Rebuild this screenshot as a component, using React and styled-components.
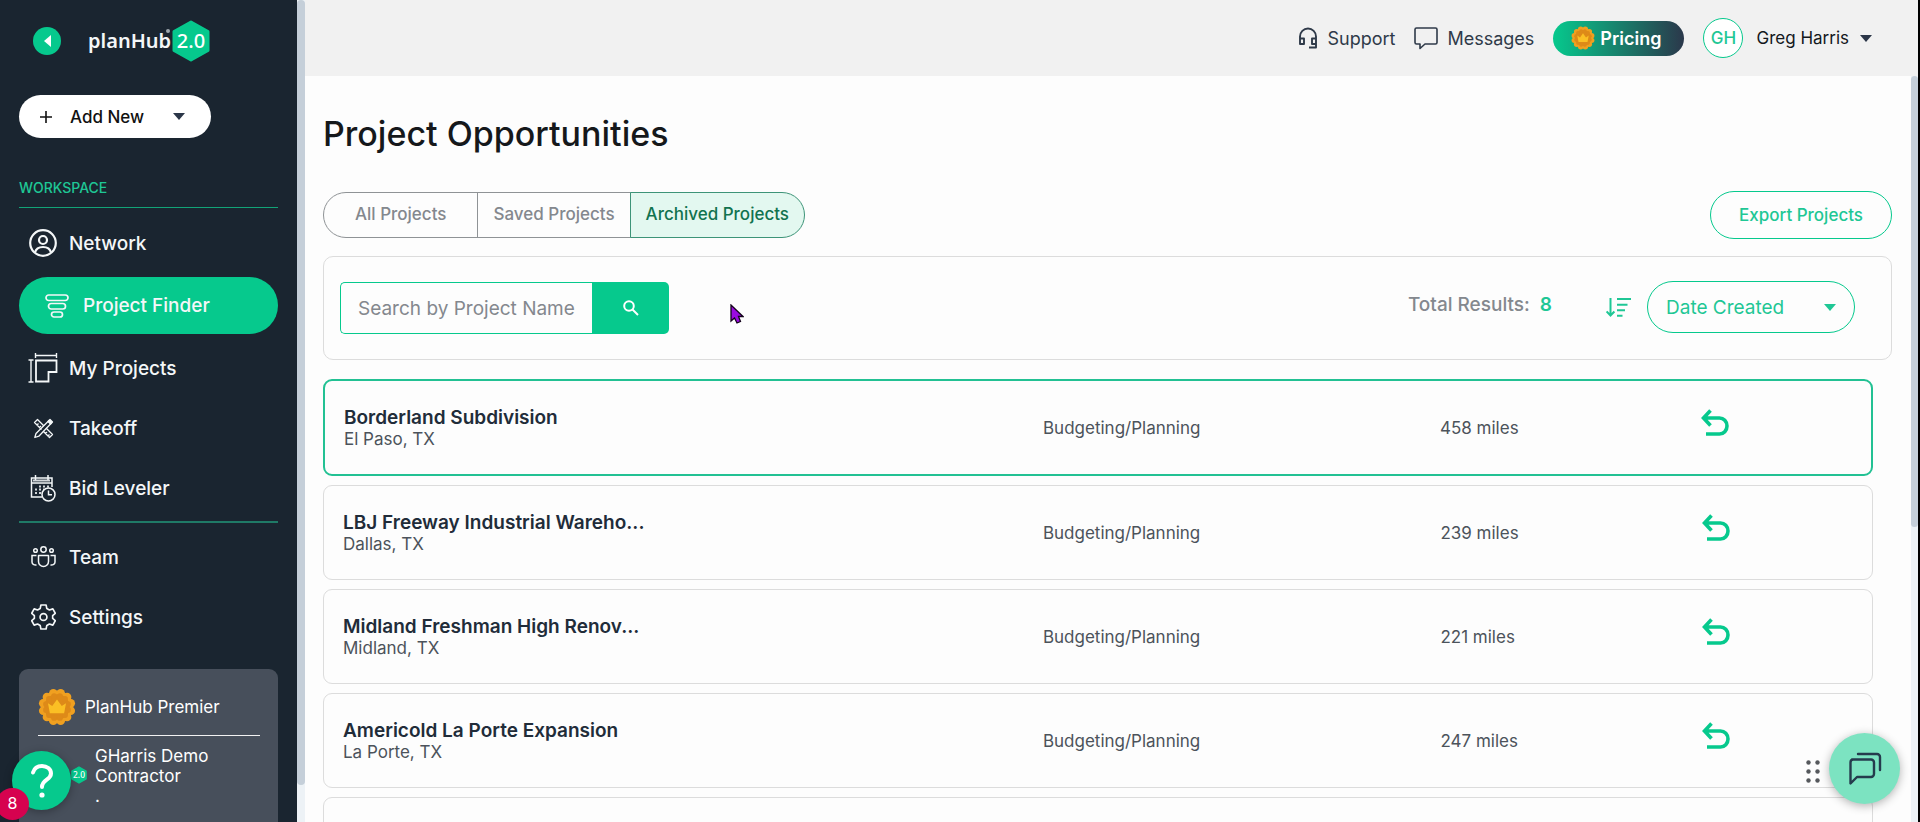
import React from 'react';
import styled, { createGlobalStyle, css } from 'styled-components';

const colors = {
    green: '#06c98d',
    greenText: '#1fc795',
    darkGreen: '#11734f',
    navy: '#1a2530',
    panel: '#474f5b',
    header: '#f1f1f1',
    page: '#fdfdfd',
    border: '#dcdcdc',
    text: '#25303c',
    muted: '#84888e',
    caret: '#2b3648',
    thumb: '#c5cfd9',
    track: '#edf2f6'
};

const GlobalStyle = createGlobalStyle`
    * {
        box-sizing:border-box;
    }
    body {
        margin:0;
        background:${ colors.page };
        color:${ colors.text };
        font-family:Inter, "Liberation Sans", sans-serif;
        font-size:17px;
    }
    button, input, select {
        font:inherit;
        color:inherit;
        margin:0;
    }
    button, select {
        cursor:pointer;
    }
    a {
        color:inherit;
        text-decoration:none;
    }
    svg {
        display:block;
        flex:none;
    }
`;

const Shell = styled.div`
    display:flex;
    height:100vh;
    overflow:hidden;
    border-right:2px solid #000;
`;

/* sidebar */

const Sidebar = styled.aside`
    display:flex;
    flex:none;
    width:305px;
    background:${ colors.navy };
    color:#f4f7f8;
`;

const SidebarBody = styled.div`
    flex:1;
    padding:20px 19px 0;
    overflow:hidden;
`;

const ScrollTrack = styled.div`
    flex:none;
    width:${ props => props.$width }px;
    background:${ colors.track };
`;

const ScrollThumb = styled.div`
    height:${ props => props.$size };
    border-radius:4px;
    background:${ colors.thumb };
`;

const Brand = styled.div`
    display:flex;
    align-items:center;
    height:42px;
    padding-left:14px;
`;

const CollapseButton = styled.button`
    display:flex;
    align-items:center;
    justify-content:center;
    width:28px;
    height:28px;
    margin-right:27px;
    padding:0;
    border:0;
    border-radius:50%;
    background:${ colors.green };
    color:#fff;
`;

const LogoLink = styled.a`
    display:flex;
    align-items:center;
    gap:1px;
`;

const Wordmark = styled.span`
    position:relative;
    font-family:"Noto Sans", sans-serif;
    font-size:20px;
    font-weight:600;
    line-height:42px;
`;

const TrademarkDot = styled.span`
    position:absolute;
    top:9px;
    right:1px;
    width:4px;
    height:4px;
    border-radius:50%;
    background:#9fa8ae;
`;

const AddNew = styled.button`
    display:flex;
    align-items:center;
    width:192px;
    height:43px;
    margin-top:33px;
    padding:0 26px 0 21px;
    border:0;
    border-radius:22px;
    background:#fff;
    color:${ colors.caret };

    span {
        flex:1;
        padding-left:18px;
        color:#111;
        font-weight:500;
        text-align:left;
    }
`;

const SectionTitle = styled.h2`
    margin:40px 0 0;
    padding-bottom:9px;
    border-bottom:1px solid #12a377;
    color:${ colors.greenText };
    font-size:14px;
    font-weight:500;
    line-height:20px;
`;

const NavList = styled.ul`
    margin:0;
    padding:5px 0 3px;
    list-style:none;

    & + & {
        padding-top:4px;
        border-top:2px solid #1f7a66;
    }
`;

const NavLink = styled.a`
    display:flex;
    align-items:center;
    gap:10px;
    height:60px;
    padding-left:8px;
    font-size:19px;
    font-weight:500;

    ${ props => props.$active && css`
        height:57px;
        margin:4px 0;
        padding-left:22px;
        border-radius:29px;
        background:${ colors.green };
    ` }
`;

const NavIcon = styled.span`
    display:flex;
    justify-content:center;
    width:32px;
`;

const PlanCard = styled.section`
    height:200px;
    margin-top:19px;
    padding:19px 18px 0 19px;
    border-radius:9px;
    background:${ colors.panel };
    color:#fff;
    line-height:20px;
`;

const PlanName = styled.div`
    display:flex;
    align-items:center;
    gap:9px;
    padding-bottom:9px;
    border-bottom:1px solid #f2f2f2;
`;

const Company = styled.div`
    display:flex;
    align-items:flex-start;
    gap:8px;
    padding:10px 0 0 33px;

    svg {
        margin-top:20px;
    }
    p {
        margin:0;
    }
`;

/* header */

const Main = styled.div`
    display:flex;
    flex:1;
    flex-direction:column;
    min-width:0;
`;

const Header = styled.header`
    display:flex;
    flex:none;
    align-items:center;
    justify-content:flex-end;
    height:76px;
    padding-right:46px;
    background:${ colors.header };
    color:#2f3a49;
    font-size:18px;
`;

const HeaderLink = styled.a`
    display:flex;
    align-items:center;
    gap:9px;
    margin-right:19px;
`;

const Pricing = styled.a`
    display:flex;
    align-items:center;
    gap:5px;
    height:35px;
    margin-right:19px;
    padding:0 23px 0 18px;
    border-radius:18px;
    background:linear-gradient(90deg, ${ colors.green }, #2b384b);
    color:#fff;
    font-weight:600;
`;

const UserMenu = styled.button`
    display:flex;
    align-items:center;
    padding:0;
    border:0;
    background:none;
    color:#14181d;

    svg {
        margin-left:11px;
        color:${ colors.caret };
    }
`;

const UserName = styled.span`
    font-size:17px;
`;

const Avatar = styled.span`
    width:40px;
    height:40px;
    margin-right:13px;
    border:1px solid ${ colors.green };
    border-radius:50%;
    background:#fff;
    color:${ colors.greenText };
    font-size:17px;
    font-weight:500;
    line-height:38px;
    text-align:center;
`;

/* content */

const Viewport = styled.div`
    display:flex;
    flex:1;
    min-height:0;
`;

const Content = styled.main`
    flex:1;
    min-width:0;
    padding:38px 19px 0 18px;
    overflow:hidden;
`;

const PageTitle = styled.h1`
    margin:0;
    color:#15181b;
    font-size:34px;
    font-weight:500;
    line-height:40px;
`;

const TabsRow = styled.div`
    display:flex;
    align-items:center;
    justify-content:space-between;
    margin-top:37px;
`;

const Tabs = styled.div`
    display:flex;
    height:46px;
`;

const Tab = styled.button`
    margin-right:-1px;
    padding:0 15px 2px;
    border:1px solid #8f9396;
    background:${ colors.page };
    color:${ colors.muted };
    font-weight:500;

    &:first-child {
        padding:0 31px 2px;
        border-radius:23px 0 0 23px;
    }
    &:last-child {
        margin-right:0;
        border-radius:0 23px 23px 0;
    }
    ${ props => props.$active && css`
        border-color:#3d9478;
        background:#e3f8f0;
        color:${ colors.darkGreen };
    ` }
`;

const ExportButton = styled.button`
    height:48px;
    padding:0 28px;
    border:1px solid ${ colors.green };
    border-radius:24px;
    background:${ colors.page };
    color:${ colors.greenText };
    font-weight:500;
`;

const FilterBar = styled.div`
    display:flex;
    align-items:center;
    justify-content:space-between;
    height:104px;
    margin-top:17px;
    padding:0 36px 0 16px;
    border:1px solid ${ colors.border };
    border-radius:10px;
`;

const SearchForm = styled.form`
    display:flex;
    width:329px;
    height:52px;
`;

const SearchInput = styled.input`
    flex:1;
    min-width:0;
    padding:0 0 0 17px;
    border:1px solid ${ colors.green };
    border-right:0;
    border-radius:5px 0 0 5px;
    background:${ colors.page };
    font-size:19px;
    outline:none;

    &::placeholder {
        color:${ colors.muted };
        opacity:1;
    }
`;

const SearchButton = styled.button`
    display:flex;
    align-items:center;
    justify-content:center;
    width:77px;
    padding:0;
    border:0;
    border-radius:0 5px 5px 0;
    background:${ colors.green };
    color:#fff;
`;

const SortGroup = styled.div`
    display:flex;
    align-items:center;
    padding-bottom:2px;
`;

const Total = styled.p`
    margin:0 54px 5px 0;
    color:${ colors.muted };
    font-size:19px;
    font-weight:500;

    strong {
        padding-left:5px;
        color:${ colors.greenText };
        font-weight:600;
    }
`;

const SortSelect = styled.label`
    display:grid;
    align-items:center;
    margin-left:16px;
    color:${ colors.greenText };

    select, svg {
        grid-area:1 / 1;
    }
    select {
        width:208px;
        height:52px;
        padding:0 40px 0 18px;
        border:1px solid ${ colors.green };
        border-radius:26px;
        background:transparent;
        font-size:19px;
        appearance:none;
        outline:none;
    }
    svg {
        justify-self:end;
        margin-right:19px;
        pointer-events:none;
    }
`;

const ProjectTable = styled.table`
    display:block;
    margin:19px 19px 0 0;

    tbody {
        display:grid;
        gap:9px;
    }
`;

const ProjectRow = styled.tr`
    display:grid;
    grid-template-columns:699fr 397fr 261fr 170fr;
    align-items:center;
    height:95px;
    padding-left:19px;
    border:1px solid ${ colors.border };
    border-radius:9px;

    ${ props => props.$selected && css`
        height:97px;
        border:2px solid #22c193;
    ` }
`;

const Cell = styled.td`
    padding:0;
    color:#4c535b;
`;

const ProjectName = styled.a`
    display:block;
    padding-top:2px;
    color:#212c39;
    font-size:19px;
    font-weight:600;
    line-height:22px;
`;

const Location = styled.span`
    display:block;
    line-height:21px;
`;

const RestoreButton = styled.button`
    display:block;
    margin-bottom:11px;
    padding:0;
    border:0;
    background:none;
    color:${ colors.green };
`;

/* floating widgets */

const HelpButton = styled.button`
    position:fixed;
    left:12px;
    bottom:12px;
    display:flex;
    align-items:center;
    justify-content:center;
    width:59px;
    height:59px;
    padding:0;
    border:0;
    border-radius:50%;
    background:${ colors.green };
    color:#fff;
    box-shadow:0 2px 8px rgba(0, 0, 0, .3);
`;

const HelpCount = styled.span`
    position:fixed;
    left:-4px;
    bottom:2px;
    width:33px;
    height:32px;
    border-radius:50%;
    background:#d6024f;
    color:#fff;
    font-size:16px;
    line-height:30px;
    text-align:center;
`;

const ChatWidget = styled.div`
    position:fixed;
    right:20px;
    bottom:18px;
    display:flex;
    align-items:center;
    gap:9px;
`;

const DragHandle = styled.span`
    padding-top:7px;
`;

const ChatButton = styled.button`
    display:flex;
    align-items:center;
    justify-content:center;
    width:71px;
    height:71px;
    padding:0;
    border:0;
    border-radius:50%;
    background:#7ce3c1;
    color:#253b4d;
    box-shadow:0 2px 10px rgba(0, 0, 0, .3);
`;

const Pointer = styled.svg`
    position:fixed;
    left:730px;
    top:304px;
`;

/* icons */

const Caret = ({ width = 12, height = 7 }) => (
    <svg width={width} height={height} viewBox="0 0 12 7" fill="currentColor" aria-hidden="true">
        <path d="M0 0h12L6 7z" />
    </svg>
);

const Hexagon = ({ width, height }) => (
    <svg width={width} height={height} viewBox="0 0 38 42" aria-hidden="true">
        <path d="M19 2l17 9.500v19L19 40 2 30.500v-19z" fill={colors.green} stroke={colors.green} strokeWidth="3" strokeLinejoin="round" />
        <text x="19" y="28" fill="#fff" fontFamily="Noto Sans, sans-serif" fontSize="20" fontWeight="500" textAnchor="middle">2.0</text>
    </svg>
);

const lobes = Array.from({ length: 12 }, (_, i) => (i * Math.PI) / 6 + Math.PI / 12);

const PremierBadge = ({ size }) => (
    <svg width={size} height={size} viewBox="-20 -20 40 40" aria-hidden="true">
        <g fill="#f0a020">
            <circle r="17" />
            {lobes.map(a => <circle key={a} cx={15 * Math.cos(a)} cy={15 * Math.sin(a)} r="4.500" />)}
        </g>
        <g fill="#de8a18">
            <circle r="13.500" />
            {lobes.map(a => <circle key={a} cx={12 * Math.cos(a)} cy={12 * Math.sin(a)} r="3" />)}
        </g>
        <path d="M-9.500-4l4.500 3 5-7 5 7 4.500-3-2 10.500h-15z" fill="#fbbf24" />
    </svg>
);

const NetworkIcon = () => (
    <svg width="28" height="28" viewBox="0 0 28 28" fill="none" stroke="currentColor" strokeWidth="2.200" aria-hidden="true">
        <circle cx="14" cy="14" r="12.800" />
        <circle cx="14" cy="11" r="4" />
        <path d="M6 23.500c1-4 4-5.500 8-5.500s7 1.500 8 5.500" />
    </svg>
);

const FinderIcon = () => (
    <svg width="24" height="24" viewBox="0 0 24 24" fill="none" stroke="currentColor" strokeWidth="1.700" aria-hidden="true">
        <rect x="1" y="1" width="22" height="5.500" rx="2.700" />
        <rect x="3.500" y="9.500" width="17" height="5.500" rx="2.700" />
        <rect x="6.500" y="18" width="11" height="5" rx="2.500" />
    </svg>
);

const BlueprintIcon = () => (
    <svg width="30" height="30" viewBox="0 0 30 30" fill="none" stroke="currentColor" aria-hidden="true">
        <path d="M8 7.500h20.500V19h-8v9.500H8z" strokeWidth="1.800" />
        <path d="M7 2.500h22M7.500 0v5M28.500 0v5M3 7v22M.5 7h5M.5 29h5" strokeWidth="1.400" />
    </svg>
);

const TakeoffIcon = () => (
    <svg width="21" height="21" viewBox="0 0 21 21" fill="none" stroke="currentColor" strokeWidth="1.300" strokeLinejoin="round" aria-hidden="true">
        <path d="M8.500 11.500L5 8 1.500 4.500l3-3L11 8M13 10l6.500 6.500-3 3L10 13M4 7l1.500-1.500M6.500 9.500L8 8M12.500 15.500L14 14M15 18l1.500-1.500" />
        <path d="M16 2.500L3 15.500 1.800 19.500l4-1.300L18.500 5z" />
        <path d="M15 3.500l2-2 2.500 2.500-2 2z" fill="currentColor" />
    </svg>
);

const BidIcon = () => (
    <svg width="26" height="27" viewBox="0 0 26 27" fill="none" stroke="currentColor" strokeWidth="1.500" aria-hidden="true">
        <path d="M12 22H1.500V3H22v9M1.500 8H22M5.500 0v5M18 0v5" />
        <path d="M9 11.500h2M13 11.500h2M17 11.500h2M5 14.500h2M9 14.500h2M13 14.500h1M5 18h2M9 18h2M3 5.500h17" strokeWidth="2" strokeOpacity=".85" />
        <circle cx="18.500" cy="19.500" r="6.500" fill={colors.navy} />
        <path d="M18.500 15.500v4.300H22" />
    </svg>
);

const TeamIcon = () => (
    <svg width="25" height="22" viewBox="0 0 25 22" fill="none" stroke="currentColor" strokeWidth="1.500" aria-hidden="true">
        <circle cx="12.500" cy="3.500" r="2.700" />
        <circle cx="4.500" cy="4.500" r="1.800" />
        <circle cx="20.500" cy="4.500" r="1.800" />
        <path d="M7.500 9.500h10v6a5 5 0 0 1-10 0z" strokeLinejoin="round" />
        <path d="M5.500 9.500H1v6.500c0 2 2 3.300 4.500 3M19.500 9.500H24v6.500c0 2-2 3.300-4.500 3" />
    </svg>
);

const GearIcon = () => (
    <svg width="25" height="26" viewBox="0 0 24 25" fill="none" stroke="currentColor" strokeWidth="1.600" strokeLinejoin="round" aria-hidden="true">
        <path d="M9.500 1h5l.7 3.400 2.500 1.400L21 4.700l2.300 4.200-2.500 2.200v2.800l2.500 2.200L21 20.300l-3.300-1.100-2.500 1.400-.7 3.400h-5l-.7-3.400-2.500-1.400L3 20.300.7 16.100l2.500-2.200v-2.800L.7 8.900 3 4.700l3.300 1.100 2.500-1.400z" />
        <circle cx="12" cy="12.500" r="3.300" />
    </svg>
);

const HeadsetIcon = () => (
    <svg width="20" height="22" viewBox="0 0 20 22" fill="none" stroke="currentColor" strokeWidth="1.900" strokeLinejoin="round" aria-hidden="true">
        <path d="M2 17V9.500a8 8 0 0 1 16 0V20.500h-7M2 11.500h4V17H2zM18 11.500h-4V17h4z" />
    </svg>
);

const MessageIcon = () => (
    <svg width="24" height="23" viewBox="0 0 24 23" fill="none" stroke="currentColor" strokeWidth="1.600" strokeLinejoin="round" aria-hidden="true">
        <path d="M2.500 1h19A1.500 1.500 0 0 1 23 2.500v13a1.500 1.500 0 0 1-1.500 1.500H11l-5 4.500V17H2.500A1.500 1.500 0 0 1 1 15.500v-13A1.500 1.500 0 0 1 2.500 1z" />
    </svg>
);

const SearchIcon = () => (
    <svg width="16" height="16" viewBox="0 0 16 16" fill="none" stroke="currentColor" strokeWidth="2" aria-hidden="true">
        <circle cx="6" cy="6" r="4.800" />
        <path d="M9.500 9.500l5.500 5.500" />
    </svg>
);

const SortIcon = () => (
    <svg width="25" height="20" viewBox="0 0 25 20" fill="none" stroke={colors.greenText} strokeWidth="2" aria-hidden="true">
        <path d="M4.500 1v17.500M.6 14.500l3.900 4 3.900-4M11 2h14M11 7.700h10.500M11 13.300h8M11 18.700h5.500" />
    </svg>
);

const RestoreIcon = () => (
    <svg width="28" height="27" viewBox="0 0 28 27" fill="none" stroke="currentColor" strokeWidth="3.600" aria-hidden="true">
        <path d="M9.500 1.500l-7 7.500 7 7.500M3 9h15.500a7.500 8 0 0 1 0 16H5" />
    </svg>
);

const QuestionIcon = () => (
    <svg width="24" height="36" viewBox="0 0 24 36" fill="none" stroke="currentColor" strokeWidth="4" strokeLinecap="round" aria-hidden="true">
        <path d="M3 9.500C4.500 4.500 8 3 12 3c5 0 9 3 9 7.500 0 6.500-9 6-9 13.500" />
        <circle cx="12" cy="32" r="2.600" fill="currentColor" stroke="none" />
    </svg>
);

const ChatIcon = () => (
    <svg width="34" height="34" viewBox="0 0 34 34" fill="none" stroke="currentColor" strokeWidth="2.400" strokeLinecap="round" strokeLinejoin="round" aria-hidden="true">
        <path d="M4 7.500h19a3 3 0 0 1 3 3V22a3 3 0 0 1-3 3H9l-6.500 6.500v-21A3 3 0 0 1 5 7.500z" />
        <path d="M10 2h19a3 3 0 0 1 3 3v13" />
    </svg>
);

const DragDots = () => (
    <svg width="14" height="24" viewBox="0 0 14 24" fill="#55585c" aria-hidden="true">
        {[2.5, 11.5, 20.5].map(y => (
            <React.Fragment key={y}>
                <circle cx="2.500" cy={y} r="2.200" />
                <circle cx="11.500" cy={y} r="2.200" />
            </React.Fragment>
        ))}
    </svg>
);

const workspaceLinks = [
    { label: 'Network', icon: NetworkIcon },
    { label: 'Project Finder', icon: FinderIcon, active: true },
    { label: 'My Projects', icon: BlueprintIcon },
    { label: 'Takeoff', icon: TakeoffIcon },
    { label: 'Bid Leveler', icon: BidIcon }
];

const accountLinks = [
    { label: 'Team', icon: TeamIcon },
    { label: 'Settings', icon: GearIcon }
];

const projects = [
    { name: 'Borderland Subdivision', location: 'El Paso, TX', distance: '458 miles' },
    { name: 'LBJ Freeway Industrial Wareho...', location: 'Dallas, TX', distance: '239 miles' },
    { name: 'Midland Freshman High Renov...', location: 'Midland, TX', distance: '221 miles' },
    { name: 'Americold La Porte Expansion', location: 'La Porte, TX', distance: '247 miles' }
];

const Navigation = ({ links }) => (
    <NavList>
        {links.map(({ label, icon: Icon, active }) => (
            <li key={label}>
                <NavLink href="#" $active={active}>
                    <NavIcon><Icon /></NavIcon>
                    {label}
                </NavLink>
            </li>
        ))}
    </NavList>
);

const App = () => {
    return (
        <Shell>
            <GlobalStyle />
            <Sidebar>
                <SidebarBody>
                    <Brand>
                        <CollapseButton aria-label="Collapse menu">
                            <svg width="7" height="12" viewBox="0 0 7 12" fill="currentColor"><path d="M7 0v12L0 6z" /></svg>
                        </CollapseButton>
                        <LogoLink href="#">
                            <Wordmark>planHub<TrademarkDot /></Wordmark>
                            <Hexagon width={38} height={42} />
                        </LogoLink>
                    </Brand>
                    <AddNew>
                        <svg width="12" height="12" viewBox="0 0 12 12" stroke="#111" strokeWidth="1.600"><path d="M6 0v12M0 6h12" /></svg>
                        <span>Add New</span>
                        <Caret />
                    </AddNew>
                    <SectionTitle>WORKSPACE</SectionTitle>
                    <Navigation links={workspaceLinks} />
                    <Navigation links={accountLinks} />
                    <PlanCard>
                        <PlanName>
                            <PremierBadge size={38} />
                            PlanHub Premier
                        </PlanName>
                        <Company>
                            <Hexagon width={16} height={18} />
                            <div>
                                <p>GHarris Demo</p>
                                <p>Contractor</p>
                                <p>.</p>
                            </div>
                        </Company>
                    </PlanCard>
                </SidebarBody>
                <ScrollTrack $width={8}><ScrollThumb $size="95.5%" /></ScrollTrack>
            </Sidebar>
            <Main>
                <Header>
                    <HeaderLink href="#"><HeadsetIcon />Support</HeaderLink>
                    <HeaderLink href="#"><MessageIcon />Messages</HeaderLink>
                    <Pricing href="#"><PremierBadge size={24} />Pricing</Pricing>
                    <UserMenu>
                        <Avatar>GH</Avatar>
                        <UserName>Greg Harris</UserName>
                        <Caret />
                    </UserMenu>
                </Header>
                <Viewport>
                    <Content>
                        <PageTitle>Project Opportunities</PageTitle>
                        <TabsRow>
                            <Tabs>
                                <Tab>All Projects</Tab>
                                <Tab>Saved Projects</Tab>
                                <Tab $active>Archived Projects</Tab>
                            </Tabs>
                            <ExportButton>Export Projects</ExportButton>
                        </TabsRow>
                        <FilterBar>
                            <SearchForm onSubmit={e => e.preventDefault()}>
                                <SearchInput type="text" aria-label="Search by Project Name" placeholder="Search by Project Name" />
                                <SearchButton aria-label="Search"><SearchIcon /></SearchButton>
                            </SearchForm>
                            <SortGroup>
                                <Total>Total Results: <strong>8</strong></Total>
                                <SortIcon />
                                <SortSelect>
                                    <select aria-label="Sort by">
                                        <option>Date Created</option>
                                    </select>
                                    <Caret />
                                </SortSelect>
                            </SortGroup>
                        </FilterBar>
                        <ProjectTable>
                            <tbody>
                                {projects.map((project, index) => (
                                    <ProjectRow key={project.name} $selected={index === 0}>
                                        <Cell>
                                            <ProjectName href="#">{project.name}</ProjectName>
                                            <Location>{project.location}</Location>
                                        </Cell>
                                        <Cell>Budgeting/Planning</Cell>
                                        <Cell>{project.distance}</Cell>
                                        <Cell>
                                            <RestoreButton aria-label={`Restore ${ project.name }`}><RestoreIcon /></RestoreButton>
                                        </Cell>
                                    </ProjectRow>
                                ))}
                                <ProjectRow />
                            </tbody>
                        </ProjectTable>
                    </Content>
                    <ScrollTrack $width={7}><ScrollThumb $size="60.5%" /></ScrollTrack>
                </Viewport>
            </Main>
            <HelpButton aria-label="Help"><QuestionIcon /></HelpButton>
            <HelpCount>8</HelpCount>
            <ChatWidget>
                <DragHandle><DragDots /></DragHandle>
                <ChatButton aria-label="Open chat"><ChatIcon /></ChatButton>
            </ChatWidget>
            <Pointer width="14" height="20" viewBox="0 0 14 20" aria-hidden="true">
                <path d="M1 1v16l3.500-3 2.500 5 3.500-1.500-2-5H13z" fill="#9b0be0" stroke="#14041c" strokeWidth="1.300" />
            </Pointer>
        </Shell>
    );
};

export default App;
